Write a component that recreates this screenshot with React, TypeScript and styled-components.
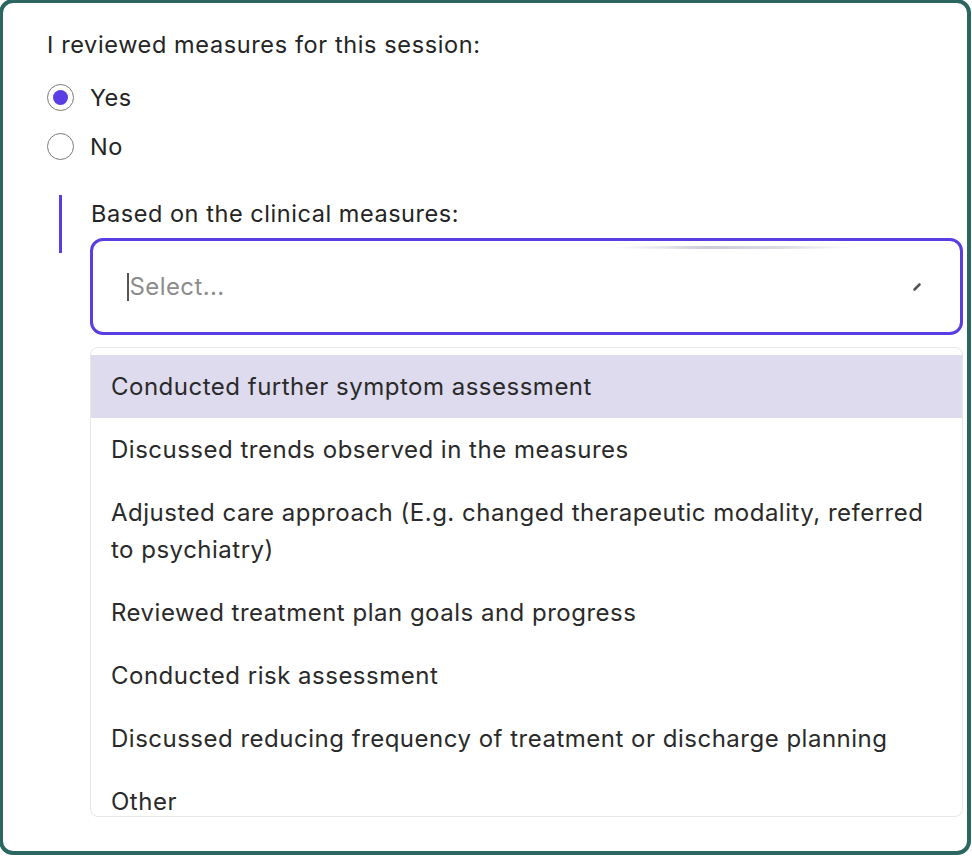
import React from "react";
import styled, { createGlobalStyle } from "styled-components";

const Global = createGlobalStyle`
  html, body { margin: 0; padding: 0; background: #ffffff; }
  body { font-family: Inter, "Noto Sans", "Liberation Sans", sans-serif; color: #222222; overflow: hidden; }
  * { box-sizing: border-box; }
`;

const Frame = styled.div`
  margin: -1px 1px 0 -1px;
  width: 972px;
  height: 856px;
  border: 4px solid #2b6760;
  border-radius: 14px;
  background: #ffffff;
  padding: 28px 0 0 44px;
  display: flex;
  flex-direction: column;
  overflow: hidden;
`;

const Label = styled.div`
  font-size: 23.5px;
  line-height: 28px;
  color: #242424;
  letter-spacing: 0.62px;
`;

const RadioGroup = styled.div`
  margin-top: 14px;
  display: flex;
  flex-direction: column;
`;

const RadioRow = styled.div`
  height: 49px;
  display: flex;
  align-items: center;
  gap: 16px;
  font-size: 23.5px;
  letter-spacing: 0.45px;
  color: #242424;
`;

const RadioCircle = styled.span<{ $checked?: boolean }>`
  width: 27px;
  height: 27px;
  border-radius: 50%;
  border: 1.5px solid #7a7a7a;
  display: flex;
  align-items: center;
  justify-content: center;
  background: #fff;
  &::after {
    content: "";
    width: 15px;
    height: 15px;
    border-radius: 50%;
    background: ${(p) => (p.$checked ? "#5a3ee4" : "transparent")};
  }
`;

const Nested = styled.div`
  margin-top: 24px;
  margin-left: 12px;
  display: flex;
  align-items: flex-start;
`;

const Bar = styled.div`
  width: 3px;
  height: 58px;
  background: #5a3ee4;
  flex: none;
`;

const NestedColumn = styled.div`
  margin-left: 28px;
  display: flex;
  flex-direction: column;
  width: 873px;
`;

const SubLabel = styled(Label)`
  margin-top: 5px;
  margin-left: 1px;
  letter-spacing: 0.55px;
`;

const SelectBox = styled.div`
  position: relative;
  margin-top: 10px;
  height: 97px;
  border: 3px solid #5a3ee4;
  border-radius: 13px;
  display: flex;
  align-items: center;
  padding: 0 38px 0 34px;
  &::after {
    content: "";
    position: absolute;
    top: 5px;
    left: 515px;
    width: 250px;
    height: 3px;
    border-radius: 50%;
    background: linear-gradient(90deg, rgba(200,203,212,0) 0%, rgba(196,199,208,0.9) 40%, rgba(200,203,212,0.6) 75%, rgba(200,203,212,0) 100%);
  }
`;

const Caret = styled.span`
  width: 1.5px;
  height: 28px;
  background: #555;
  margin-right: 1px;
`;

const Placeholder = styled.span`
  flex: 1;
  font-size: 24px;
  letter-spacing: 0.4px;
  color: #8c8c8c;
`;

const Menu = styled.div`
  margin-top: 12px;
  height: 470px;
  border: 1px solid #e6e6e6;
  border-radius: 8px;
  padding-top: 7px;
  overflow: hidden;
  background: #fff;
`;

const Option = styled.div<{ $active?: boolean }>`
  padding: 13px 20px;
  font-size: 24px;
  line-height: 37px;
  letter-spacing: 0.5px;
  color: #2a2a2a;
  background: ${(p) => (p.$active ? "#dedbee" : "transparent")};
`;

const options = [
  "Conducted further symptom assessment",
  "Discussed trends observed in the measures",
  "Adjusted care approach (E.g. changed therapeutic modality, referred to psychiatry)",
  "Reviewed treatment plan goals and progress",
  "Conducted risk assessment",
  "Discussed reducing frequency of treatment or discharge planning",
  "Other",
];

export default function App() {
  return (
    <>
      <Global />
      <Frame>
        <Label>I reviewed measures for this session:</Label>
        <RadioGroup>
          <RadioRow>
            <RadioCircle $checked />
            Yes
          </RadioRow>
          <RadioRow>
            <RadioCircle />
            No
          </RadioRow>
        </RadioGroup>
        <Nested>
          <Bar />
          <NestedColumn>
            <SubLabel>Based on the clinical measures:</SubLabel>
            <SelectBox>
              <Caret />
              <Placeholder>Select...</Placeholder>
              <svg width="10" height="10" viewBox="0 0 10 10">
                <line x1="2.5" y1="7.5" x2="7.5" y2="2.5" stroke="#555" strokeWidth="2.6" strokeLinecap="round" />
              </svg>
            </SelectBox>
            <Menu>
              {options.map((o, i) => (
                <Option key={o} $active={i === 0}>
                  {o}
                </Option>
              ))}
            </Menu>
          </NestedColumn>
        </Nested>
      </Frame>
    </>
  );
}
